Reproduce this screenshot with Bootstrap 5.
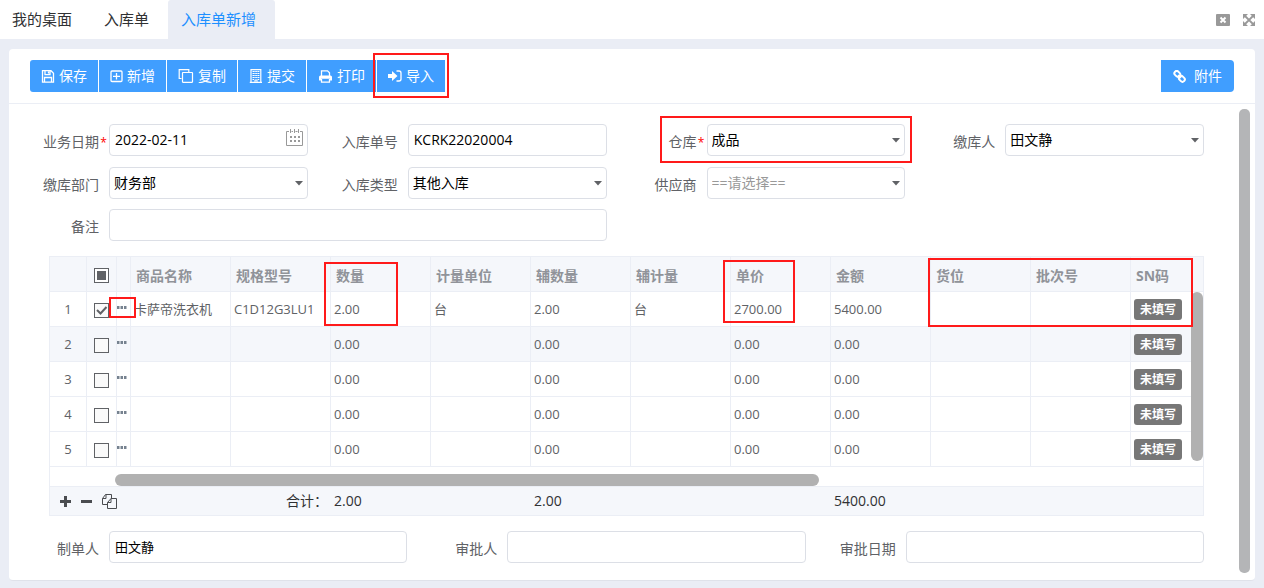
<!DOCTYPE html>
<html lang="zh-CN">
<head>
<meta charset="utf-8">
<meta name="viewport" content="width=device-width, initial-scale=1">
<title>入库单新增</title>
<link href="https://cdn.jsdelivr.net/npm/bootstrap@5.3.0/dist/css/bootstrap.min.css" rel="stylesheet">
<style>
  body { background: #eaedf5; color: #606266; font-family: "Open Sans", "Noto Sans CJK SC", sans-serif; font-size: 14px; line-height: 20px; }
  .topbar { height: 39px; }
  .tab-link { color: #303133; font-size: 15px; line-height: 39px; padding: 0 19px 0 13px; text-decoration: none; }
  .tab-link:first-child { padding-left: 12px; }
  .tab-link.active { color: #1e90ff; background: #eaedf5; border-radius: 3px 3px 0 0; }
  .win-btns { gap: 13px; padding-right: 9px; }
  .win-btn { border: 0; background: none; padding: 0; color: #999; line-height: 0; }
  .panel { margin: 10px 9px 8px; border-radius: 4px; border-bottom: 1px solid #dfe2ea; }
  .toolbar { padding: 11px 21px; border-bottom: 1px solid #ebeef5; }
  .tool { --bs-btn-color: #fff; --bs-btn-bg: #409eff; --bs-btn-hover-color: #fff; --bs-btn-hover-bg: #66b1ff; --bs-btn-border-width: 0; --bs-btn-border-radius: 0; --bs-btn-font-size: 14px; --bs-btn-line-height: 32px; --bs-btn-padding-y: 0; --bs-btn-padding-x: 11px; display: flex; align-items: center; gap: 4px; white-space: nowrap; }
  .tool-first { --bs-btn-border-radius: 3px 0 0 3px; }
  .tool-attach { --bs-btn-border-radius: 0 4px 4px 0; --bs-btn-padding-x: 12px; gap: 8px; }
  .tools { gap: 1px; }
  .sheet { padding: 20px 0 17px; min-width: 0; }
  .field-row { margin-bottom: 10px; }
  .field-label { width: 100px; flex: none; padding: 4px 10px 0 0; line-height: 28px; text-align: right; white-space: nowrap; }
  .field-label.required { padding-right: 1px; }
  .star { color: #f00; display: inline-block; width: 9px; font-size: 12px; text-align: center; }
  .field { height: 32px; min-height: 32px; padding: 0 5px 2px; border: 1px solid #dcdfe6; border-radius: 4px; color: #000; font-size: 14px; line-height: 28px; }
  select.field { line-height: 30px; padding: 0 20px 0 4px; background: #fff url("data:image/svg+xml,%3Csvg xmlns='http://www.w3.org/2000/svg' width='8' height='5'%3E%3Cpath fill='%23606266' d='M0 0h8L4 4.500z'/%3E%3C/svg%3E") no-repeat right 4px center / 8px 5px; }
  select.unset { color: #999; }
  .field-sm { font-size: 13px; }
  .cal-icon { position: absolute; right: 5px; top: 5px; }
  .mark-box { position: absolute; z-index: 5; border: 2px solid #ff1a1a; pointer-events: none; }
  .mark-import { left: -4px; top: -7px; right: -4px; bottom: -6px; }
  .mark-store { left: 53px; top: -8px; right: -7px; bottom: -6px; }
  .mark-qty { left: -7px; top: 5px; width: 74px; height: 64px; }
  .mark-price { left: -8px; top: 3px; width: 72px; height: 63px; }
  .mark-more { left: -8px; top: 5px; width: 27px; height: 21px; }
  .mark-lot { left: 878px; top: 1px; right: 10px; height: 69px; }
  .grid-wrap { border: 1px solid #ebeef5; margin: 15px 0 15px 40px; }
  .goods { width: 100%; table-layout: fixed; border-collapse: separate; border-spacing: 0; }
  .goods th, .goods td { height: 35px; padding: 0 3px; border: solid #ebeef5; border-width: 0 1px 1px 0; white-space: nowrap; position: relative; }
  .goods tr > :last-child { border-right: 0; }
  .goods th { background: #f5f7fb; color: #909399; padding: 3px 5px 0; font-weight: 700; line-height: 20px; }
  .goods td { font-size: 13px; line-height: 20px; }
  .goods .alt td { background: #f5f7fb; }
  .goods .tick-cell { padding: 3px 0 0 7px; line-height: 0; }
  .goods .more-cell { padding: 0 0 4px; line-height: 0; }
  .c-no { width: 37px; } .c-tick { width: 30px; } .c-more { width: 14px; } .c-data { width: 100px; }
  .tick { appearance: none; width: 15px; height: 15px; margin: 0; border: 1px solid #606266; background: #fafafa center / 13px 13px no-repeat; }
  .tick:checked { background-image: url("data:image/svg+xml,%3Csvg xmlns='http://www.w3.org/2000/svg' viewBox='0 0 13 13'%3E%3Cpath fill='none' stroke='%23606266' stroke-width='2' d='M2 6l3.500 3.500L11.500 3'/%3E%3C/svg%3E"); }
  .tick:indeterminate { box-shadow: inset 0 0 0 2px #fff; background-color: #606266; }
  .plain-btn { border: 0; background: none; padding: 0; color: #606266; line-height: 0; }
  .sn-btn { border: 0; border-radius: 3px; background: #777; color: #fff; font-size: 12px; font-weight: 700; line-height: 21px; padding: 0 6px; display: block; }
  .v-thumb { position: absolute; right: 0; top: 35px; width: 12px; height: 169px; background: #b1b1b1; border-radius: 6px; }
  .h-track { padding: 7px 0 0 65px; height: 19px; }
  .h-thumb { width: 65%; max-width: 704px; height: 12px; background: #b1b1b1; border-radius: 6px; }
  .totals { background: #f5f7fb; border-top: 1px solid #ebeef5; color: #303133; line-height: 28px; }
  .sum-head { width: 281px; padding: 0 3px 0 10px; flex: none; }
  .sum-qty { width: 200px; padding-left: 3px; flex: none; }
  .sum-aux { width: 300px; padding-left: 3px; flex: none; }
  .sum-amt { padding-left: 3px; }
  .page-thumb { width: 11px; flex: none; margin: 5px 5px 7px 35px; background: #b4b5b7; border-radius: 5px; }
</style>
</head>
<body>
<header class="topbar bg-white d-flex justify-content-between align-items-center">
  <nav class="d-flex" aria-label="页面">
    <a class="tab-link" href="#">我的桌面</a>
    <a class="tab-link" href="#">入库单</a>
    <a class="tab-link active" href="#" aria-current="page">入库单新增</a>
  </nav>
  <div class="win-btns d-flex align-items-center">
    <button class="win-btn" type="button" aria-label="关闭"><svg width="14" height="12" viewBox="0 0 14 12"><rect width="14" height="12" rx="1" fill="#999"/><path d="M4.500 3.500l5 5m0-5l-5 5" stroke="#fff" stroke-width="2"/></svg></button>
    <button class="win-btn" type="button" aria-label="全屏"><svg width="12" height="12" viewBox="0 0 12 12"><path fill="#999" d="M0 0h5L0 5zM12 0v5L7 0zM0 12V7l5 5zM12 12H7l5-5z"/><path d="M2 2l8 8M10 2l-8 8" stroke="#999" stroke-width="1.800"/></svg></button>
  </div>
</header>

<main class="panel bg-white">
  <div class="toolbar d-flex justify-content-between">
    <div class="tools d-flex">
      <button type="button" class="btn tool tool-first"><svg width="14" height="13" viewBox="0 0 14 13" fill="none" stroke="#fff" stroke-width="1.300"><path d="M1.500.700h8.500l2.500 2.500v9H1.500zM4 .700v4h5v-4M3.500 12V7.500h7V12M7.500 1.500v2"/></svg>保存</button>
      <button type="button" class="btn tool"><svg width="13" height="13" viewBox="0 0 13 13" fill="none" stroke="#fff" stroke-width="1.300"><rect x="1" y="1" width="11" height="10.500" rx="1"/><path d="M6.500 3v6.500M3 6.300h7"/></svg>新增</button>
      <button type="button" class="btn tool"><svg width="16" height="14" viewBox="0 0 16 14" fill="none" stroke="#fff" stroke-width="1.200"><path d="M3.500 9.500H1.200V.7h9.600v2.500"/><rect x="4.500" y="3.500" width="10" height="9.800" rx=".5"/></svg>复制</button>
      <button type="button" class="btn tool"><svg width="14" height="14" viewBox="0 0 14 14" fill="none" stroke="#fff"><path stroke-width="1.200" d="M2 13.300V.6h9.800v12.700M.8 13.300h12.200"/><path d="M3.500 2.500h7M3.500 4.500h7M3.500 6.500h7M3.500 8.500h7M3.500 10.500h2M8.500 10.500h2" stroke-dasharray="1.500 .3"/><path d="M6 13v-2h2v2"/></svg>提交</button>
      <button type="button" class="btn tool"><svg width="15" height="13" viewBox="0 0 15 13"><path fill="none" stroke="#fff" stroke-width="1.300" d="M3.500 6V.8h6l2 2V6M3.500 9v3.200h8V9"/><path fill="#fff" d="M1 7q0-1.500 1.500-1.500h10Q14 5.500 14 7v3.500h-2V8.700H3v1.800H1z"/></svg>打印</button>
      <div class="position-relative">
        <button type="button" class="btn tool"><svg width="14" height="12" viewBox="0 0 14 12"><path fill="#fff" d="M0 4h4V1l5.500 5L4 11V8H0z"/><path fill="none" stroke="#fff" stroke-width="1.300" d="M8.500 1H11q2 0 2 2v6q0 2-2 2H8.500"/></svg>导入</button>
        <span class="mark-box mark-import"></span>
      </div>
    </div>
    <button type="button" class="btn tool tool-attach"><svg width="13" height="13" viewBox="0 0 13 13" fill="none" stroke="#fff" stroke-width="2"><rect x="1.200" y="1.600" width="6.200" height="4.600" rx="2.200" transform="rotate(45 4.300 3.900)"/><rect x="5.800" y="6.600" width="6.200" height="4.600" rx="2.200" transform="rotate(45 8.900 8.900)"/><path d="M5 5l3 3" stroke-width="1.500"/></svg>附件</button>
  </div>

  <div class="d-flex">
    <form class="sheet flex-grow-1">
      <div class="row g-0 field-row">
        <div class="col-3 d-flex">
          <label class="field-label required" for="bizDate">业务日期<span class="star">*</span></label>
          <div class="position-relative flex-grow-1"><input class="form-control field" id="bizDate" type="text" value="2022-02-11">
            <svg class="cal-icon" width="17" height="17" viewBox="0 0 17 17"><path fill="none" stroke="#999" d="M3 2.500H.5v14h16v-14H14M5.500 2.500H7M9.500 2.500h2M4.500 0v4M8.500 0v4M12.500 0v4"/><path stroke="#999" stroke-width="2" stroke-dasharray="2 2" d="M4 8h10M4 12h10"/></svg></div>
        </div>
        <div class="col-3 d-flex"><label class="field-label" for="billNo">入库单号</label><input class="form-control field" id="billNo" type="text" value="KCRK22020004"></div>
        <div class="col-3 d-flex position-relative">
          <label class="field-label required" for="store">仓库<span class="star">*</span></label>
          <select class="form-select field" id="store"><option>成品</option></select>
          <span class="mark-box mark-store"></span>
        </div>
        <div class="col-3 d-flex"><label class="field-label" for="payer">缴库人</label><select class="form-select field" id="payer"><option>田文静</option></select></div>
      </div>
      <div class="row g-0 field-row">
        <div class="col-3 d-flex"><label class="field-label" for="dept">缴库部门</label><select class="form-select field" id="dept"><option>财务部</option></select></div>
        <div class="col-3 d-flex"><label class="field-label" for="kind">入库类型</label><select class="form-select field" id="kind"><option>其他入库</option></select></div>
        <div class="col-3 d-flex"><label class="field-label" for="vendor">供应商</label><select class="form-select field unset" id="vendor"><option>==请选择==</option></select></div>
      </div>
      <div class="row g-0">
        <div class="col-6 d-flex"><label class="field-label" for="remark">备注</label><input class="form-control field" id="remark" type="text"></div>
      </div>

      <div class="grid-wrap">
        <div class="position-relative">
          <table class="goods">
            <colgroup><col class="c-no"><col class="c-tick"><col class="c-more"><col class="c-data"><col class="c-data"><col class="c-data"><col class="c-data"><col class="c-data"><col class="c-data"><col class="c-data"><col class="c-data"><col class="c-data"><col class="c-data"><col></colgroup>
            <thead>
              <tr><th></th><th class="tick-cell"><input class="tick" id="tickAll" type="checkbox" aria-label="全选"></th><th></th><th>商品名称</th><th>规格型号</th><th>数量<span class="mark-box mark-qty"></span></th><th>计量单位</th><th>辅数量</th><th>辅计量</th><th>单价<span class="mark-box mark-price"></span></th><th>金额</th><th>货位</th><th>批次号</th><th>SN码</th></tr>
            </thead>
            <tbody>
              <tr><td class="text-center">1</td><td class="tick-cell"><input class="tick" type="checkbox" aria-label="选择第1行" checked></td><td class="more-cell"><button type="button" class="plain-btn" aria-label="更多"><svg width="10" height="3" viewBox="0 0 10 3"><path fill="#76828f" d="M0 0h2.500v3H0zM3.500 0H6v3H3.500zM7 0h2.500v3H7z"/></svg></button><span class="mark-box mark-more"></span></td><td>卡萨帝洗衣机</td><td>C1D12G3LU1</td><td>2.00</td><td>台</td><td>2.00</td><td>台</td><td>2700.00</td><td>5400.00</td><td></td><td></td><td><button type="button" class="sn-btn">未填写</button></td></tr>
              <tr class="alt"><td class="text-center">2</td><td class="tick-cell"><input class="tick" type="checkbox" aria-label="选择第2行"></td><td class="more-cell"><button type="button" class="plain-btn" aria-label="更多"><svg width="10" height="3" viewBox="0 0 10 3"><path fill="#76828f" d="M0 0h2.500v3H0zM3.500 0H6v3H3.500zM7 0h2.500v3H7z"/></svg></button></td><td></td><td></td><td>0.00</td><td></td><td>0.00</td><td></td><td>0.00</td><td>0.00</td><td></td><td></td><td><button type="button" class="sn-btn">未填写</button></td></tr>
              <tr><td class="text-center">3</td><td class="tick-cell"><input class="tick" type="checkbox" aria-label="选择第3行"></td><td class="more-cell"><button type="button" class="plain-btn" aria-label="更多"><svg width="10" height="3" viewBox="0 0 10 3"><path fill="#76828f" d="M0 0h2.500v3H0zM3.500 0H6v3H3.500zM7 0h2.500v3H7z"/></svg></button></td><td></td><td></td><td>0.00</td><td></td><td>0.00</td><td></td><td>0.00</td><td>0.00</td><td></td><td></td><td><button type="button" class="sn-btn">未填写</button></td></tr>
              <tr><td class="text-center">4</td><td class="tick-cell"><input class="tick" type="checkbox" aria-label="选择第4行"></td><td class="more-cell"><button type="button" class="plain-btn" aria-label="更多"><svg width="10" height="3" viewBox="0 0 10 3"><path fill="#76828f" d="M0 0h2.500v3H0zM3.500 0H6v3H3.500zM7 0h2.500v3H7z"/></svg></button></td><td></td><td></td><td>0.00</td><td></td><td>0.00</td><td></td><td>0.00</td><td>0.00</td><td></td><td></td><td><button type="button" class="sn-btn">未填写</button></td></tr>
              <tr><td class="text-center">5</td><td class="tick-cell"><input class="tick" type="checkbox" aria-label="选择第5行"></td><td class="more-cell"><button type="button" class="plain-btn" aria-label="更多"><svg width="10" height="3" viewBox="0 0 10 3"><path fill="#76828f" d="M0 0h2.500v3H0zM3.500 0H6v3H3.500zM7 0h2.500v3H7z"/></svg></button></td><td></td><td></td><td>0.00</td><td></td><td>0.00</td><td></td><td>0.00</td><td>0.00</td><td></td><td></td><td><button type="button" class="sn-btn">未填写</button></td></tr>
            </tbody>
          </table>
          <span class="v-thumb"></span>
          <span class="mark-box mark-lot"></span>
        </div>
        <div class="h-track"><div class="h-thumb"></div></div>
        <div class="totals d-flex">
          <div class="sum-head d-flex align-items-center justify-content-between">
            <div class="d-flex align-items-center" style="gap:10px">
              <button type="button" class="plain-btn" aria-label="添加行"><svg width="11" height="11" viewBox="0 0 11 11"><path stroke="#4a4c50" stroke-width="3" d="M0 5.500h11M5.500 0v11"/></svg></button>
              <button type="button" class="plain-btn" aria-label="删除行"><svg width="11" height="11" viewBox="0 0 11 11"><path stroke="#4a4c50" stroke-width="3" d="M0 5.500h11"/></svg></button>
              <button type="button" class="plain-btn" aria-label="复制行"><svg width="15" height="15" viewBox="0 0 15 15" fill="none" stroke="#4a4c50"><path d="M5.500 10.500h-5v-6l3-4h6v4M4 .5v4H.5M5.500 14.500v-6l3.500-4h5.500v10zM9 4.500v4H5.500"/></svg></button>
            </div>
            <span>合计：</span>
          </div>
          <div class="sum-qty">2.00</div><div class="sum-aux">2.00</div><div class="sum-amt">5400.00</div>
        </div>
      </div>

      <div class="row g-0">
        <div class="col-4 d-flex"><label class="field-label" for="maker">制单人</label><input class="form-control field field-sm" id="maker" type="text" value="田文静"></div>
        <div class="col-4 d-flex"><label class="field-label" for="approver">审批人</label><input class="form-control field field-sm" id="approver" type="text"></div>
        <div class="col-4 d-flex"><label class="field-label" for="approveDate">审批日期</label><input class="form-control field field-sm" id="approveDate" type="text"></div>
      </div>
    </form>
    <div class="page-thumb"></div>
  </div>
</main>
<script src="https://cdn.jsdelivr.net/npm/bootstrap@5.3.0/dist/js/bootstrap.bundle.min.js"></script>
<script>document.getElementById('tickAll').indeterminate = true;</script>
</body>
</html>
